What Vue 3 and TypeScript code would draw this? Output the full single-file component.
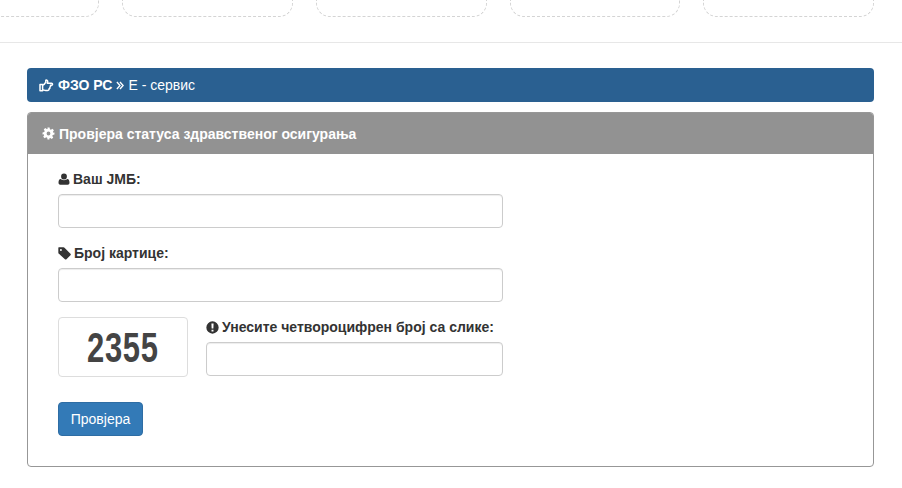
<script setup lang="ts">
const tiles: number[] = [1, 2, 3, 4, 5]
</script>

<template>
  <div class="page">
    <div class="tiles">
      <div v-for="t in tiles" :key="t" class="tile"></div>
    </div>
    <hr class="rule" />
    <main class="content">
      <div class="crumb">
        <svg class="i-hand" viewBox="0 0 15 13" aria-hidden="true">
          <path d="M1 5.600h2.600v6.200H1z M3.600 6.200c1.500-.4 2.400-1.500 3-2.800.3-.7.2-1.500.2-2.200 1.200-.4 2 .5 1.900 1.600-.1.500-.3 1-.5 1.400h4.300c1.400 0 1.400 2 0 2h-1.100c.5.800.2 1.600-.5 1.900.2.800-.1 1.500-.8 1.700.1 1-.6 1.700-1.600 1.700H6.700c-1.200 0-2-.6-3.100-.7z" fill="none" stroke="#fff" stroke-width="1.500" stroke-linejoin="round" />
        </svg>
        <strong>ФЗО РС</strong>
        <svg class="i-chev" viewBox="0 0 9 10" aria-hidden="true">
          <path d="M1 1l3.500 4L1 9M4.500 1L8 5 4.500 9" fill="none" stroke="#fff" stroke-width="1.500" />
        </svg>
        <span>Е - сервис</span>
      </div>
      <section class="panel">
        <h1 class="panel-head">
          <svg class="i-cog" viewBox="0 0 24 24" aria-hidden="true">
            <path fill="#fff" fill-rule="evenodd" d="M10 1h4l.6 3.200 1.900.8 2.700-1.800 2.800 2.800-1.800 2.700.8 1.900L23 10v4l-3.200.6-.8 1.900 1.800 2.700-2.800 2.800-2.700-1.800-1.900.8L13.800 23h-3.600l-.6-3.200-1.900-.8-2.700 1.800-2.800-2.800 1.800-2.700-.8-1.900L1 14v-4l3.200-.6.8-1.900-1.800-2.700 2.800-2.800 2.700 1.800 1.900-.8zM12 8.500a3.500 3.500 0 1 0 0 7 3.500 3.500 0 0 0 0-7z" />
          </svg>
          Провјера статуса здравственог осигурања
        </h1>
        <form class="panel-body" @submit.prevent>
          <div class="field">
            <label class="label" for="jmb">
              <svg class="i-label" viewBox="0 0 12 12" aria-hidden="true">
                <path fill="#333" d="M6 .5a2.900 2.900 0 0 1 2.900 3A2.900 2.900 0 0 1 6 6.500a2.900 2.900 0 0 1-2.900-3A2.900 2.900 0 0 1 6 .5zM2.700 6c.8.700 2 1.200 3.300 1.200S8.500 6.700 9.300 6c1.500.2 2.200 1.500 2.200 3.800 0 1.200-.7 1.900-1.800 1.900H2.300c-1.100 0-1.800-.7-1.800-1.900C.5 7.500 1.200 6.200 2.700 6z" />
              </svg>
              Ваш JМБ:
            </label>
            <input id="jmb" class="input" type="text" />
          </div>
          <div class="field">
            <label class="label" for="card">
              <svg class="i-label i-wide" viewBox="0 0 12 12" aria-hidden="true">
                <path fill="#333" fill-rule="evenodd" d="M.3.800C.3.500.5.300.8.300h4.300c.3 0 .7.200.9.400l5.500 5.500c.4.400.4 1 0 1.400l-3.700 3.700c-.4.400-1 .4-1.400 0L.9 6.300C.5 6 .3 5.600.3 5.200zM2.700 1.800a.9.900 0 1 0 0 1.800.9.900 0 0 0 0-1.800z" />
              </svg>
              Број картице:
            </label>
            <input id="card" class="input" type="text" />
          </div>
          <div class="captcha-row">
            <div class="captcha"><span class="captcha-text">2355</span></div>
            <div class="captcha-field">
              <label class="label" for="code">
                <svg class="i-label i-wide" viewBox="0 0 12 12" aria-hidden="true">
                  <path fill="#333" fill-rule="evenodd" d="M6 .3a5.700 5.700 0 1 1 0 11.400A5.700 5.700 0 0 1 6 .3zM5 2.300l.2 4.700h1.600L7 2.300zM5.100 8v1.700h1.800V8z" />
                </svg>
                Унесите четвороцифрен број са слике:
              </label>
              <input id="code" class="input" type="text" />
            </div>
          </div>
          <button class="btn" type="submit">Провјера</button>
        </form>
      </section>
    </main>
  </div>
</template>

<style>
html, body { margin: 0; background: #fff; overflow: hidden; }
</style>

<style scoped>
.page {
  width: 902px;
  height: 488px;
  overflow: hidden;
  font-family: "Liberation Sans", Arial, sans-serif;
  font-size: 14px;
  line-height: 20px;
  color: #333;
  box-sizing: border-box;
}
.tiles {
  display: flex;
  gap: 23px;
  margin-left: -71.200px;
}
.tile {
  width: 170.600px;
  height: 17px;
  flex: none;
  box-sizing: border-box;
  border: 1px dashed #d4d4d4;
  border-top: 0;
  border-radius: 0 0 14px 14px;
}
.rule {
  margin: 25px 0 0;
  border: 0;
  border-top: 1px solid #e7e7e7;
  height: 0;
}
.content {
  margin: 25px 28px 0 27px;
}
.crumb {
  height: 34px;
  box-sizing: border-box;
  background: #2a6091;
  border-radius: 4px;
  color: #fff;
  display: flex;
  align-items: center;
  padding-left: 12px;
}
.crumb strong { margin-left: 4px; }
.i-hand { width: 15px; height: 13px; flex: none; }
.i-chev { width: 8px; height: 9px; margin: 1px 4px 0 4px; flex: none; }
.panel {
  margin-top: 10px;
  height: 355px;
  box-sizing: border-box;
  border: 1px solid #979797;
  border-radius: 4px;
  overflow: hidden;
}
.panel-head {
  margin: 0;
  height: 41px;
  background: #929292;
  color: #fff;
  font-size: 14px;
  font-weight: 700;
  line-height: 40px;
  padding-left: 14px;
  display: flex;
  align-items: center;
  gap: 4px;
}
.i-cog { width: 13px; height: 13px; flex: none; }
.panel-body {
  padding: 15px 30px 0;
  width: 445px;
  box-sizing: content-box;
}
.field { margin-bottom: 15px; }
.label {
  display: flex;
  align-items: center;
  gap: 3px;
  font-weight: 700;
  height: 20px;
  margin-bottom: 5px;
}
.i-label { width: 12px; height: 12px; flex: none; }
.i-wide { width: 13px; height: 13px; }
.input {
  display: block;
  width: 100%;
  height: 34px;
  box-sizing: border-box;
  border: 1px solid #ccc;
  border-radius: 4px;
  background: #fff;
  box-shadow: inset 0 1px 1px rgba(0, 0, 0, 0.075);
  padding: 6px 12px;
}
.captcha-row {
  display: flex;
  gap: 18px;
  align-items: flex-start;
}
.captcha {
  width: 130px;
  height: 60px;
  flex: none;
  box-sizing: border-box;
  border: 1px solid #ddd;
  border-radius: 4px;
  display: flex;
  align-items: center;
  justify-content: center;
}
.captcha-text {
  display: inline-block;
  font-size: 43px;
  font-weight: 700;
  line-height: 40px;
  color: #444;
  letter-spacing: 1px;
  transform: scaleX(0.72);
}
.captcha-field { flex: 1; min-width: 0; }
.btn {
  display: block;
  margin-top: 25px;
  width: 85px;
  height: 34px;
  box-sizing: border-box;
  padding: 0;
  border: 1px solid #2e6da4;
  border-radius: 4px;
  background: #337ab7;
  color: #fff;
  font: 14px/20px "Liberation Sans", Arial, sans-serif;
}
</style>
